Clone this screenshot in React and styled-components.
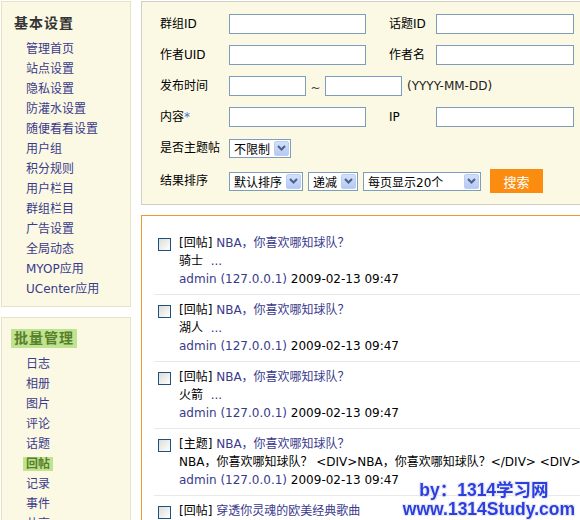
import React from 'react';
import styled, { createGlobalStyle } from 'styled-components';

const GlobalStyle = createGlobalStyle`
  html, body {
    margin: 0;
    padding: 0;
    background: #fff;
    overflow: hidden;
  }
  body {
    font-family: "DejaVu Sans", "Noto Sans CJK SC", sans-serif;
    font-size: 12px;
    color: #000;
  }
`;

const linkColor = '#3a3a8c';
const creamBg = '#fbf9e4';
const green = '#bfe38f';

const Page = styled.div`
  display: flex;
  align-items: flex-start;
  gap: 10px;
  padding: 1px;
  width: 640px;
  height: 520px;
`;

const Sidebar = styled.div`
  width: 130px;
  flex-shrink: 0;
  display: flex;
  flex-direction: column;
  gap: 10px;
`;

const SideBox = styled.div`
  background: ${creamBg};
  border: 1px solid #e6e2c6;
  padding: ${p => (p.$compact ? '11px 0 7px' : '12px 0 7px')};
`;

const SideTitle = styled.div`
  font-size: 14px;
  font-weight: bold;
  letter-spacing: 1px;
  line-height: 18px;
  color: #333;
  padding-left: 12px;
  margin-bottom: 7px;
`;

const GroupTitle = styled.div`
  display: inline-block;
  margin-left: 9px;
  padding: 0 3px;
  line-height: 19px;
  font-size: 14px;
  font-weight: bold;
  letter-spacing: 1px;
  color: #577f2c;
  background: ${green};
  margin-bottom: 6px;
`;

const NavList = styled.ul`
  list-style: none;
  margin: 0;
  padding: 0 0 0 24px;
`;

const NavItem = styled.li`
  line-height: 20px;
  height: 20px;
  color: ${linkColor};
`;

const NavActive = styled.span`
  display: inline-block;
  margin-left: -3px;
  padding: 0 3px;
  line-height: 14px;
  font-weight: bold;
  color: #577f2c;
  background: ${green};
`;

const Main = styled.div`
  width: 470px;
  flex-shrink: 0;
  display: flex;
  flex-direction: column;
  gap: 10px;
`;

const FormPanel = styled.div`
  background: ${creamBg};
  border: 1px solid #d2d0c4;
  padding: 12px 0 11px 18px;
  display: grid;
  grid-template-columns: 69px 160px 47px 138px;
  row-gap: 11px;
  align-items: center;
`;

const Label = styled.div`
  line-height: 20px;
  white-space: nowrap;
`;

const Star = styled.span`
  color: #3f74c9;
`;

const Input = styled.div`
  box-sizing: border-box;
  width: ${p => p.$w || 137}px;
  height: 20px;
  background: #fff;
  border: 1px solid #7f9db9;
`;

const Wide = styled.div`
  grid-column: 2 / 5;
  display: flex;
  align-items: center;
  gap: ${p => p.$gap || 0}px;
`;

const Tilde = styled.span`
  width: 19px;
  text-align: center;
  color: #444;
  padding-top: 4px;
`;

const Hint = styled.span`
  margin-left: 5px;
  color: #222;
`;

const SelectBox = styled.div`
  box-sizing: border-box;
  width: ${p => p.$w}px;
  height: 19px;
  background: #fff;
  border: 1px solid #7f9db9;
  display: flex;
  align-items: center;
  justify-content: space-between;
  padding: 0 1px 0 4px;
  white-space: nowrap;
`;

const ArrowBox = styled.span`
  width: 15px;
  height: 15px;
  border-radius: 2px;
  background: linear-gradient(#d2e0fc, #b4c9f4);
  border: 1px solid #bccdf0;
  box-sizing: border-box;
  display: flex;
  align-items: center;
  justify-content: center;
`;

const SearchButton = styled.div`
  margin-left: 4px;
  width: 53px;
  height: 24px;
  background: #fb8c10;
  color: #fff;
  font-size: 13px;
  display: flex;
  align-items: center;
  justify-content: center;
`;

const ListPanel = styled.div`
  background: #fff;
  border-top: 1px solid #f0992c;
  border-left: 1px solid #f0992c;
  padding: 12px 0 0 12px;
`;

const Item = styled.div`
  display: flex;
  padding: 6px 0;
  border-bottom: 1px solid #e8e8e8;
`;

const Check = styled.span`
  flex-shrink: 0;
  width: 13px;
  height: 13px;
  box-sizing: border-box;
  margin: 4px 8px 0 4px;
  border: 1px solid #1c5180;
  background: linear-gradient(135deg, #dcdcd7, #fff);
`;

const Lines = styled.div`
  display: flex;
  flex-direction: column;
`;

const Line = styled.div`
  line-height: 18px;
  white-space: nowrap;
`;

const A = styled.span`
  color: ${linkColor};
`;

const Watermark = styled.div`
  position: fixed;
  right: 5px;
  bottom: 1px;
  text-align: center;
  font-family: "Liberation Sans", "Noto Sans CJK SC", sans-serif;
  font-weight: bold;
  font-size: 17.5px;
  line-height: 19px;
  color: #2b3fe0;
  text-shadow: 1px 1px 0 #e8e8f4, -1px -1px 0 #e8e8f4, 1px -1px 0 #e8e8f4,
    -1px 1px 0 #e8e8f4;
`;

const WatermarkTop = styled.div`
  padding-right: 10px;
`;

const Chevron = () => (
  <svg width="9" height="6" viewBox="0 0 9 6">
    <path d="M1 1 L4.5 4.5 L8 1" fill="none" stroke="#4d6185" strokeWidth="2" />
  </svg>
);

const Select = ({ w, children }) => (
  <SelectBox $w={w}>
    <span>{children}</span>
    <ArrowBox>
      <Chevron />
    </ArrowBox>
  </SelectBox>
);

const basicNav = [
  '管理首页', '站点设置', '隐私设置', '防灌水设置', '随便看看设置', '用户组',
  '积分规则', '用户栏目', '群组栏目', '广告设置', '全局动态', 'MYOP应用', 'UCenter应用',
];

const batchNav = ['日志', '相册', '图片', '评论', '话题', '回帖', '记录', '事件', '共享'];

const posts = [
  { type: '回帖', title: 'NBA，你喜欢哪知球队？', body: '骑士', more: true },
  { type: '回帖', title: 'NBA，你喜欢哪知球队？', body: '湖人', more: true },
  { type: '回帖', title: 'NBA，你喜欢哪知球队？', body: '火箭', more: true },
  {
    type: '主题',
    title: 'NBA，你喜欢哪知球队？',
    body: 'NBA，你喜欢哪知球队？  <DIV>NBA，你喜欢哪知球队？</DIV> <DIV>NBA，你喜欢哪知球队？</DIV>',
  },
  { type: '回帖', title: '穿透你灵魂的欧美经典歌曲', body: '好听', more: true },
];

export default function App() {
  return (
    <>
      <GlobalStyle />
      <Page>
        <Sidebar>
          <SideBox>
            <SideTitle>基本设置</SideTitle>
            <NavList>
              {basicNav.map(n => (
                <NavItem key={n}>{n}</NavItem>
              ))}
            </NavList>
          </SideBox>
          <SideBox $compact>
            <GroupTitle>批量管理</GroupTitle>
            <NavList>
              {batchNav.map(n => (
                <NavItem key={n}>
                  {n === '回帖' ? <NavActive>{n}</NavActive> : n}
                </NavItem>
              ))}
            </NavList>
          </SideBox>
        </Sidebar>

        <Main>
          <FormPanel>
            <Label>群组ID</Label>
            <Input />
            <Label>话题ID</Label>
            <Input $w={138} />

            <Label>作者UID</Label>
            <Input />
            <Label>作者名</Label>
            <Input $w={138} />

            <Label>发布时间</Label>
            <Wide>
              <Input $w={77} />
              <Tilde>~</Tilde>
              <Input $w={77} />
              <Hint>(YYYY-MM-DD)</Hint>
            </Wide>

            <Label>
              内容<Star>*</Star>
            </Label>
            <Input />
            <Label>IP</Label>
            <Input $w={138} />

            <Label>是否主题帖</Label>
            <Wide>
              <Select w={62}>不限制</Select>
            </Wide>

            <Label>结果排序</Label>
            <Wide $gap={5}>
              <Select w={74}>默认排序</Select>
              <Select w={50}>递减</Select>
              <Select w={118}>每页显示20个</Select>
              <SearchButton>搜索</SearchButton>
            </Wide>
          </FormPanel>

          <ListPanel>
            {posts.map((p, i) => (
              <Item key={i}>
                <Check />
                <Lines>
                  <Line>
                    [{p.type}] <A>{p.title}</A>
                  </Line>
                  <Line>
                    {p.body}
                    {p.more && <A>&nbsp;&nbsp;...</A>}
                  </Line>
                  <Line>
                    <A>admin (127.0.0.1)</A> 2009-02-13 09:47
                  </Line>
                </Lines>
              </Item>
            ))}
          </ListPanel>
        </Main>
      </Page>
      <Watermark>
        <WatermarkTop>by：1314学习网</WatermarkTop>
        <div>www.1314Study.com</div>
      </Watermark>
    </>
  );
}
